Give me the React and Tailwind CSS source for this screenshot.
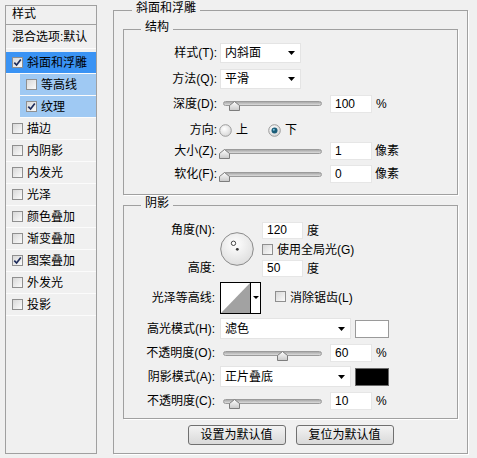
import React from 'react';

const font = "font-['Liberation_Sans','Noto_Sans_CJK_SC',sans-serif]";

function Check({ checked }) {
  return (
    <span className="inline-flex w-[11px] h-[11px] shrink-0 items-center justify-center border border-[#8f8f8f] bg-linear-to-br from-[#d8d8d8] to-[#fbfbfb]">
      {checked && (
        <svg width="9" height="9" viewBox="0 0 9 9">
          <path d="M1.3 4.6 L3.6 7 L7.8 1.6" fill="none" stroke="#1f2d5c" strokeWidth="1.7" />
        </svg>
      )}
    </span>
  );
}

function Radio({ checked }) {
  return (
    <svg width="13" height="13" viewBox="0 0 13 13" className="shrink-0">
      <defs>
        <radialGradient id={checked ? 'rOn' : 'rOff'} cx="0.4" cy="0.35" r="0.7">
          <stop offset="0" stopColor="#ffffff" />
          <stop offset="1" stopColor="#d6d6d6" />
        </radialGradient>
      </defs>
      <circle cx="6.5" cy="6.5" r="5.8" fill={`url(#${checked ? 'rOn' : 'rOff'})`} stroke="#9c9c9c" />
      {checked && <circle cx="6.5" cy="6.5" r="3" fill="#1b5d78" />}
      {checked && <circle cx="5.8" cy="5.7" r="1" fill="#7fc3dd" />}
    </svg>
  );
}

function Arrow() {
  return (
    <svg width="7" height="4" viewBox="0 0 7 4" className="shrink-0">
      <path d="M0 0 H7 L3.5 4 Z" fill="#000" />
    </svg>
  );
}

function Select({ value, width }) {
  return (
    <div className={`${width} h-full flex items-center justify-between bg-white border border-[#e4e4e4] pl-[4px] pr-[5px]`}>
      <span>{value}</span>
      <Arrow />
    </div>
  );
}

function NumBox({ value }) {
  return (
    <div className="w-[42px] h-[18px] bg-white border border-[#e6e6e6] pl-[4px] leading-[16px]">{value}</div>
  );
}

function Slider({ value }) {
  return (
    <div className="w-[110px] h-full flex items-center">
      <div className="relative ml-[3px] w-[99px] h-[5px] rounded-full border border-[#9b9b9b] bg-linear-to-b from-[#a9a9a9] to-[#dcdcdc]">
        <svg
          className="absolute top-[-1px]"
          style={{ left: `${(value * 97) / 100 - 5}px` }}
          width="11"
          height="10"
          viewBox="0 0 11 10"
        >
          <defs>
            <linearGradient id="thumb" x1="0" y1="0" x2="0" y2="1">
              <stop offset="0" stopColor="#ffffff" />
              <stop offset="1" stopColor="#c8c8c8" />
            </linearGradient>
          </defs>
          <path d="M5.5 0.5 L10.5 4.5 V9.5 H0.5 V4.5 Z" fill="url(#thumb)" stroke="#7d7d7d" />
        </svg>
      </div>
    </div>
  );
}

function StyleItem({ label, checked, selected, sub }) {
  return (
    <div
      className={`flex items-center h-[22px] border-b border-[#fbfbfb] ${sub ? 'ml-[14px] pl-[6px] bg-[#9fc9f3]' : 'pl-[6px]'} ${selected ? 'bg-[#3a93f4]' : ''}`}
    >
      <Check checked={checked} />
      <span className="ml-[4px] whitespace-nowrap">{label}</span>
    </div>
  );
}

function Group({ title, className, children, titleLeft }) {
  return (
    <div className={`relative border border-[#a0a0a0] shadow-[1px_1px_0_#ffffff] ${className}`}>
      <span className={`absolute top-[-10px] ${titleLeft} px-[4px] bg-[#f0f0f0] leading-[14px]`}>{title}</span>
      {children}
    </div>
  );
}

function Row({ label, labelW = 'w-[93px]', gap = 'ml-[3px]', className, children }) {
  return (
    <div className={`flex items-center ${className}`}>
      <div className={`${labelW} shrink-0 text-right whitespace-nowrap`}>{label}</div>
      <div className={`${gap} flex items-center h-full`}>{children}</div>
    </div>
  );
}

function Contour() {
  return (
    <svg width="41" height="32" viewBox="0 0 41 32" className="shrink-0">
      <rect x="0.5" y="0.5" width="40" height="31" fill="#fff" stroke="#000" />
      <path d="M1 31 L30 1 V31 Z" fill="#a2a2a2" />
      <line x1="30.5" y1="1" x2="30.5" y2="31" stroke="#000" />
      <path d="M33 14 H39 L36 17 Z" fill="#000" />
    </svg>
  );
}

function Dial() {
  return (
    <svg width="34" height="34" viewBox="0 0 34 34" className="shrink-0">
      <defs>
        <radialGradient id="dial" cx="0.45" cy="0.35" r="0.7">
          <stop offset="0" stopColor="#ffffff" />
          <stop offset="1" stopColor="#dcdcdc" />
        </radialGradient>
      </defs>
      <circle cx="17" cy="17" r="16.3" fill="url(#dial)" stroke="#8a8a8a" />
      <circle cx="13.5" cy="11.3" r="2.2" fill="#fff" stroke="#333" strokeWidth="0.9" />
      <circle cx="17.3" cy="17.3" r="1.4" fill="#333" />
    </svg>
  );
}

function Button({ children }) {
  return (
    <button className="w-[98px] h-[20px] rounded-[3px] border border-[#707070] bg-linear-to-b from-[#f3f3f3] to-[#d9d9d9] leading-[18px] text-center">
      {children}
    </button>
  );
}

const styleItems = [
  { label: '描边' },
  { label: '内阴影' },
  { label: '内发光' },
  { label: '光泽' },
  { label: '颜色叠加' },
  { label: '渐变叠加' },
  { label: '图案叠加', checked: true },
  { label: '外发光' },
  { label: '投影' },
];

export default function App() {
  return (
    <div className={`w-[477px] h-[458px] bg-[#f0f0f0] flex items-start text-[12px] text-black ${font}`}>
      {/* left style list */}
      <div className="ml-[5px] mt-[5px] w-[92px] h-[449px] border border-[#a0a0a0] flex flex-col">
        <div className="h-[19px] border-b border-[#a0a0a0] pl-[6px] leading-[17px]">样式</div>
        <div className="h-[24px] border-b border-[#fbfbfb] pl-[6px] flex items-center whitespace-nowrap">混合选项:默认</div>
        <div className="mt-[3px]">
          <StyleItem label="斜面和浮雕" checked selected />
          <StyleItem label="等高线" sub />
          <StyleItem label="纹理" checked sub />
          {styleItems.map((it) => (
            <StyleItem key={it.label} label={it.label} checked={it.checked} />
          ))}
        </div>
      </div>

      {/* right settings */}
      <Group title="斜面和浮雕" titleLeft="left-[18px]" className="ml-[16px] mt-[10px] w-[355px] h-[444px] pt-[18px] px-[9px] flex flex-col">
        <Group title="结构" titleLeft="left-[17px]" className="h-[166px] flex flex-col">
          <Row label="样式(T):" className="mt-[13px] h-[20px]">
            <Select value="内斜面" width="w-[81px]" />
          </Row>
          <Row label="方法(Q):" className="mt-[6px] h-[20px]">
            <Select value="平滑" width="w-[81px]" />
          </Row>
          <Row label="深度(D):" className="mt-[5px] h-[19px]">
            <Slider value={10} />
            <NumBox value="100" />
            <span className="ml-[4px]">%</span>
          </Row>
          <Row label="方向:" className="mt-[8px] h-[18px]" gap="ml-[2px]">
            <Radio />
            <span className="ml-[4px]">上</span>
            <span className="ml-[20px]"><Radio checked /></span>
            <span className="ml-[4px]">下</span>
          </Row>
          <Row label="大小(Z):" className="mt-[3px] h-[18px]">
            <Slider value={0} />
            <NumBox value="1" />
            <span className="ml-[3px]">像素</span>
          </Row>
          <Row label="软化(F):" className="mt-[5px] h-[18px]">
            <Slider value={0} />
            <NumBox value="0" />
            <span className="ml-[3px]">像素</span>
          </Row>
        </Group>

        <Group title="阴影" titleLeft="left-[17px]" className="mt-[10px] h-[214px] flex flex-col">
          <div className="mt-[16px] flex h-[55px]">
            <div className="w-[91px] shrink-0 flex flex-col items-end">
              <div className="h-[17px] leading-[17px]">角度(N):</div>
              <div className="mt-[21px] h-[17px] leading-[17px]">高度:</div>
            </div>
            <div className="ml-[5px] mt-[10px]">
              <Dial />
            </div>
            <div className="ml-[8px] flex flex-col">
              <div className="flex items-center h-[17px]">
                <div className="w-[41px] h-[17px] bg-white border border-[#e6e6e6] pl-[4px] leading-[15px]">120</div>
                <span className="ml-[4px]">度</span>
              </div>
              <div className="mt-[4px] flex items-center h-[13px]">
                <Check />
                <span className="ml-[4px] whitespace-nowrap">使用全局光(G)</span>
              </div>
              <div className="mt-[4px] flex items-center h-[17px]">
                <div className="w-[41px] h-[17px] bg-white border border-[#e6e6e6] pl-[4px] leading-[15px]">50</div>
                <span className="ml-[4px]">度</span>
              </div>
            </div>
          </div>
          <Row label="光泽等高线:" labelW="w-[91px]" gap="ml-[5px]" className="mt-[5px] h-[32px]">
            <Contour />
            <span className="ml-[14px]"><Check /></span>
            <span className="ml-[4px] whitespace-nowrap">消除锯齿(L)</span>
          </Row>
          <Row label="高光模式(H):" labelW="w-[91px]" gap="ml-[5px]" className="mt-[4px] h-[21px]">
            <Select value="滤色" width="w-[131px]" />
            <div className="ml-[4px] w-[34px] h-[18px] bg-white border border-[#9a9a9a]" />
          </Row>
          <Row label="不透明度(O):" labelW="w-[91px]" gap="ml-[5px]" className="mt-[5px] h-[18px]">
            <Slider value={60} />
            <NumBox value="60" />
            <span className="ml-[4px]">%</span>
          </Row>
          <Row label="阴影模式(A):" labelW="w-[91px]" gap="ml-[5px]" className="mt-[4px] h-[21px]">
            <Select value="正片叠底" width="w-[131px]" />
            <div className="ml-[4px] w-[34px] h-[18px] bg-black border border-[#6a6a6a]" />
          </Row>
          <Row label="不透明度(C):" labelW="w-[91px]" gap="ml-[5px]" className="mt-[5px] h-[18px]">
            <Slider value={10} />
            <NumBox value="10" />
            <span className="ml-[4px]">%</span>
          </Row>
        </Group>

        <div className="mt-[6px] flex justify-center gap-[10px]">
          <Button>设置为默认值</Button>
          <Button>复位为默认值</Button>
        </div>
      </Group>
    </div>
  );
}
